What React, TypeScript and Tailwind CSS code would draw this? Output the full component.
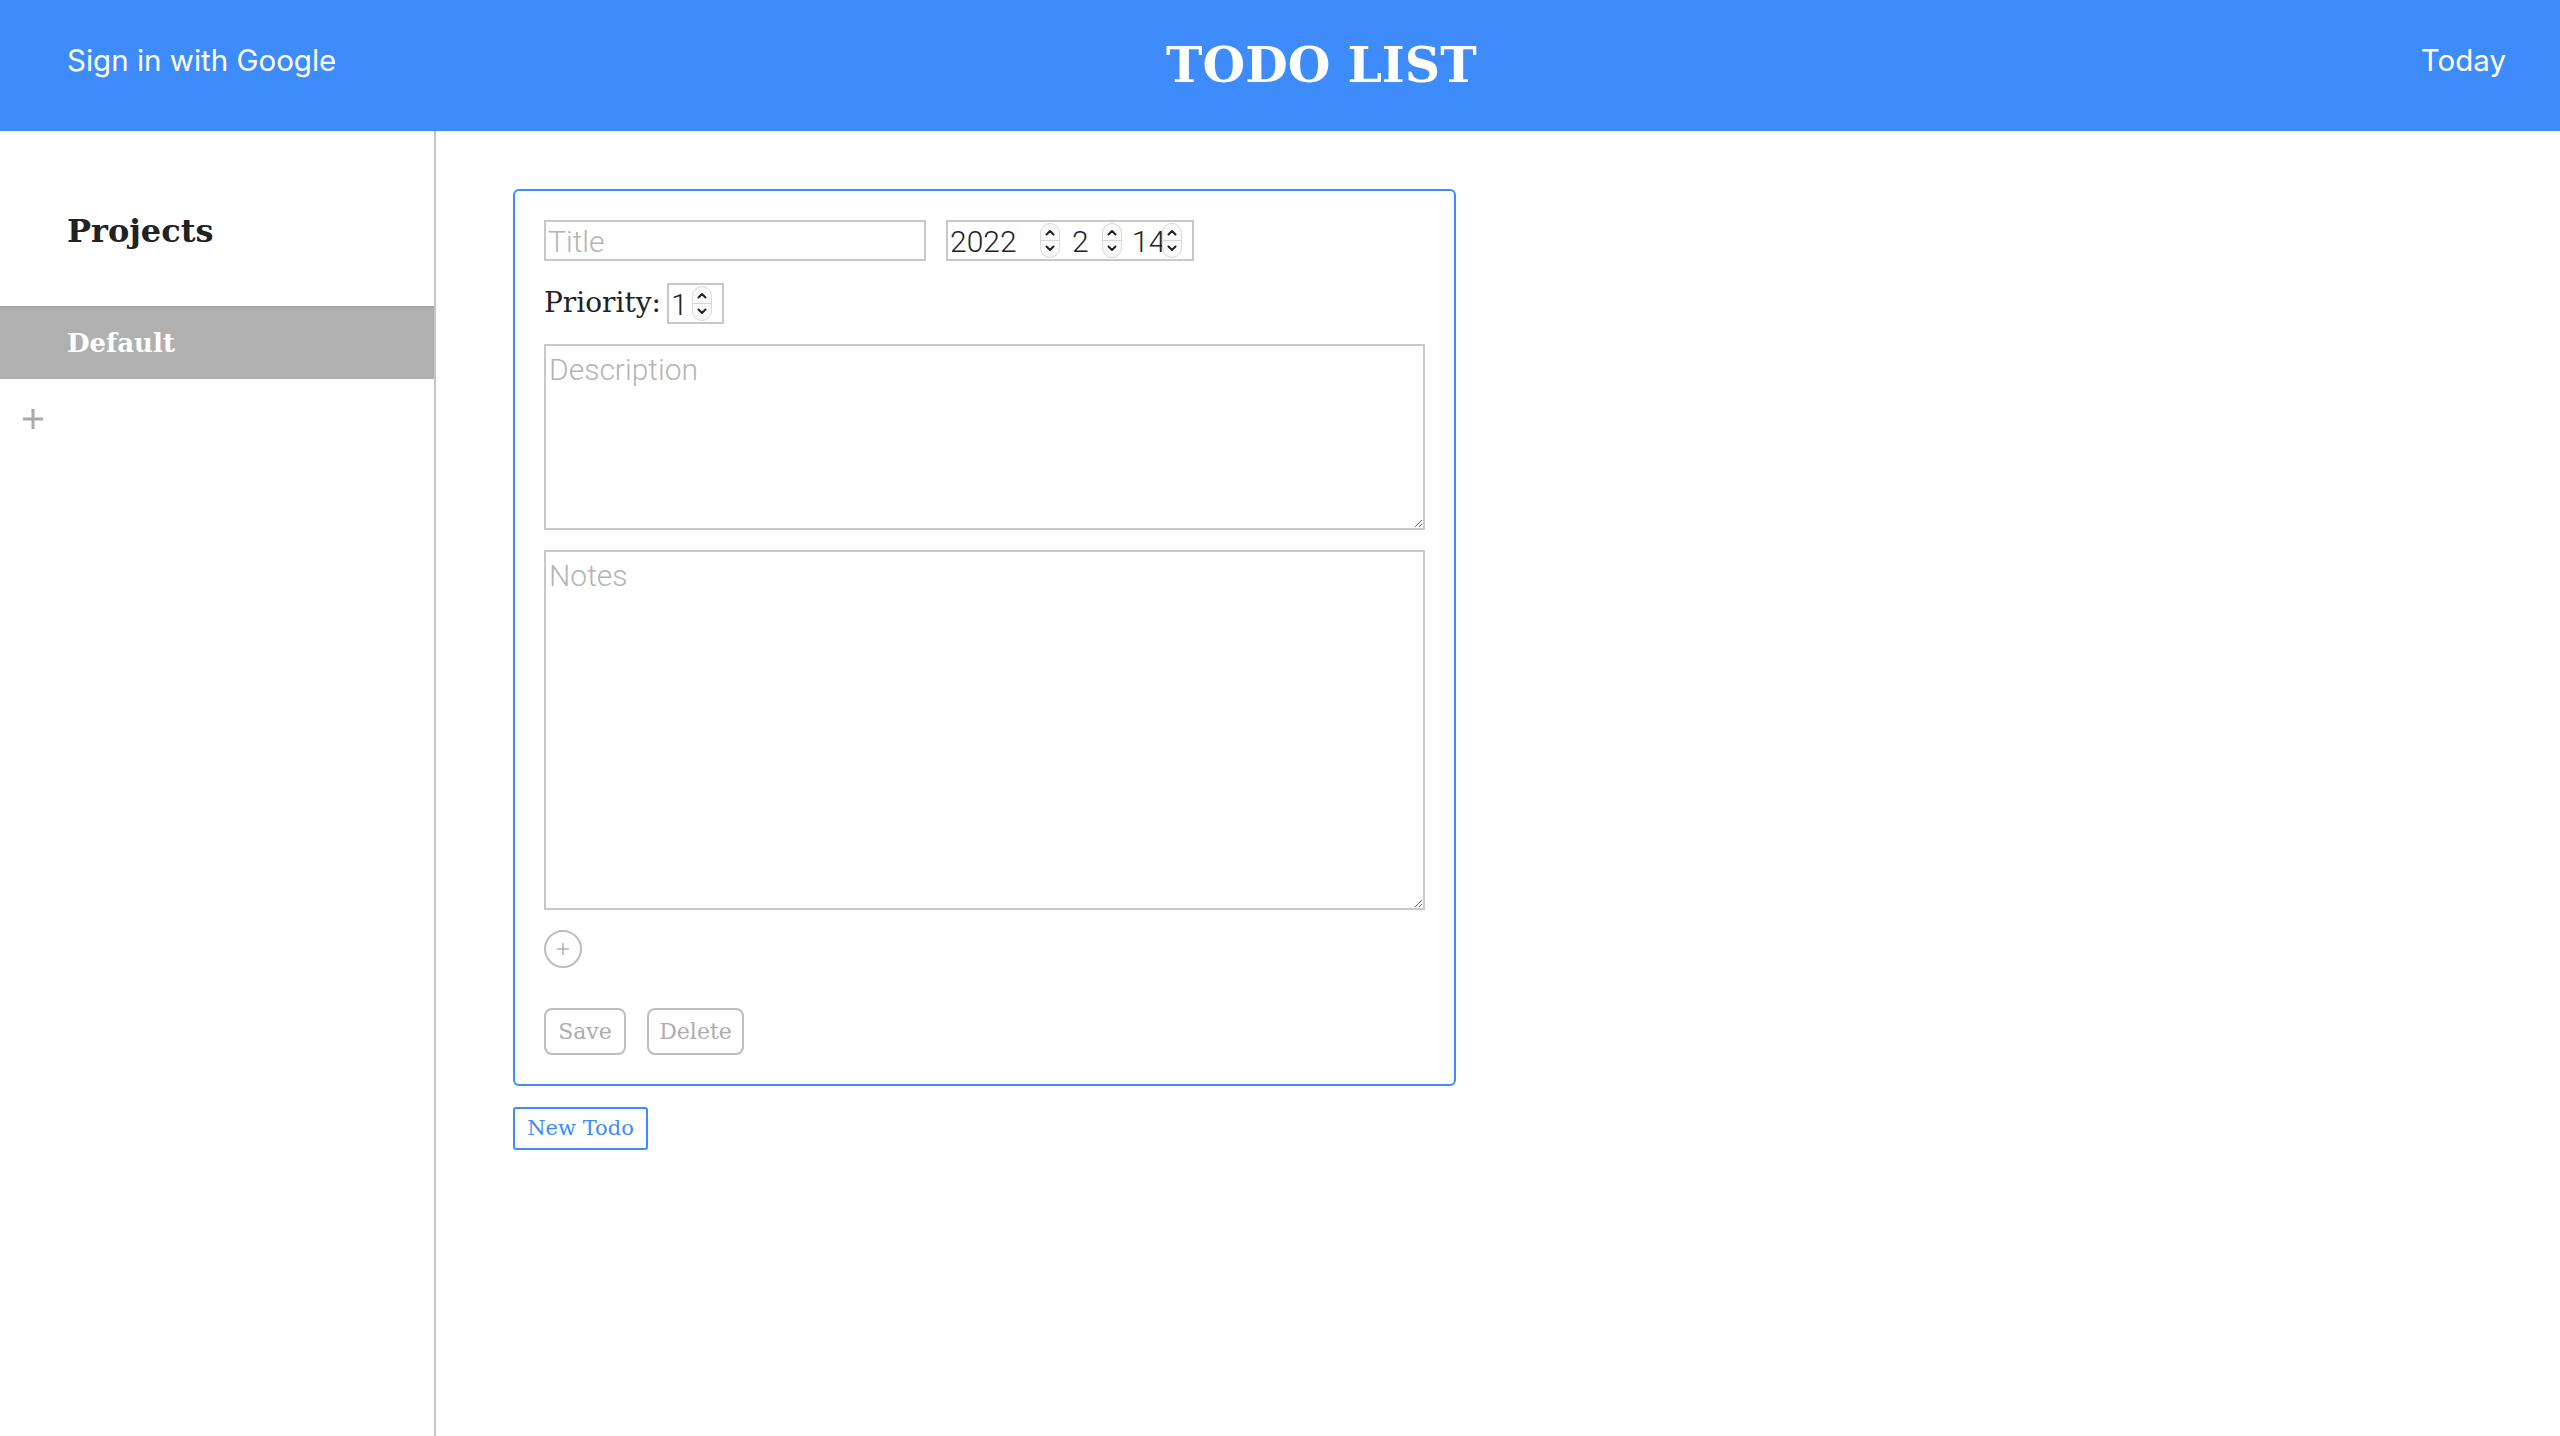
import React from 'react';

const slab = "font-['DejaVu_Serif',serif]";
const sans = "font-['Roboto','Liberation_Sans',sans-serif]";

const Spinner = () => (
  <span className="flex h-[35px] w-[20px] shrink-0 flex-col items-center justify-between rounded-full border border-[#d9d9d9] bg-[#fafafa] py-[5px]">
    <svg width="10" height="7" viewBox="0 0 10 7">
      <path d="M1.5 5.5 5 2l3.5 3.5" stroke="#222" strokeWidth="2" fill="none" strokeLinecap="round" strokeLinejoin="round" />
    </svg>
    <span className="h-px w-full bg-[#d6d6d6]" />
    <svg width="10" height="7" viewBox="0 0 10 7">
      <path d="M1.5 1.5 5 5l3.5-3.5" stroke="#222" strokeWidth="2" fill="none" strokeLinecap="round" strokeLinejoin="round" />
    </svg>
  </span>
);

export default function App() {
  return (
    <div className="flex min-h-screen flex-col bg-white">
      {/* Top bar */}
      <header className="flex h-[131px] shrink-0 items-center bg-[#3e8bfb] pl-[67px] pr-[54px] text-white">
        <div className="w-[1099px] shrink-0">
          <span className="mb-[10px] block font-['Inter',sans-serif] text-[29.5px]">Sign in with Google</span>
        </div>
        <h1 className={`${slab} text-[49px] font-bold leading-none`}>TODO LIST</h1>
        <span className="mb-[10px] ml-auto font-['Inter',sans-serif] text-[29.5px]">Today</span>
      </header>

      <div className="flex flex-1">
        {/* Sidebar */}
        <aside className="w-[436px] shrink-0 border-r-2 border-[#c6c6c6]">
          <div className="h-[175px] pl-[67px] pt-[80px]">
            <h2 className={`${slab} text-[32px] font-bold leading-[40px] text-[#222]`}>Projects</h2>
          </div>
          <div className="flex h-[73px] items-center border-t-2 border-[#a6a6a6] bg-[#b0b0b0] pl-[67px]">
            <span className={`${slab} text-[26px] font-bold text-white`}>Default</span>
          </div>
          <div className="mt-[29px] pl-[22px]">
            <svg width="22" height="22" viewBox="0 0 22 22">
              <path d="M11 1v20M1 11h20" stroke="#a9a9a9" strokeWidth="3" />
            </svg>
          </div>
        </aside>

        {/* Main */}
        <main className="flex-1 pl-[77px] pt-[58px]">
          <div className="w-[943px] rounded-[6px] border-2 border-[#3e8bfb] px-[29px] pb-[29px] pt-[29px]">
            <div className="flex h-[41px] gap-[20px]">
              <input
                type="text"
                placeholder="Title"
                className={`${sans} h-[41px] w-[382px] border-2 border-[#c8c8c8] px-[2px] pt-[2px] text-[30px] font-light text-[#222] outline-none placeholder:text-[#b4b4b4]`}
              />
              <div className={`${sans} flex h-[41px] w-[248px] items-center border-2 border-[#c8c8c8] pl-[2px] pt-[2px] text-[30px] font-light text-[#222]`}>
                <span className="w-[88px]">2022</span>
                <span className="ml-[2px] -mt-[2px]"><Spinner /></span>
                <span className="ml-[12px] w-[30px]">2</span>
                <span className="-mt-[2px]"><Spinner /></span>
                <span className="ml-[10px] w-[30px]">14</span>
                <span className="-mt-[2px]"><Spinner /></span>
              </div>
            </div>

            <div className="mt-[21px] flex items-center gap-[6px]">
              <span className={`${slab} text-[28px] text-[#222]`}>Priority:</span>
              <div className={`${sans} flex h-[41px] w-[57px] items-center border-2 border-[#c8c8c8] pl-[2px] pt-[2px] text-[30px] font-light text-[#222]`}>
                <span className="w-[21px]">1</span>
                <span className="-mt-[2px]"><Spinner /></span>
              </div>
            </div>

            <textarea
              placeholder="Description"
              className={`${sans} mt-[20px] block h-[186px] w-full border-2 border-[#c8c8c8] px-[3px] pb-[4px] pt-[1px] text-[30px] font-light text-[#222] outline-none placeholder:text-[#b4b4b4]`}
            />
            <textarea
              placeholder="Notes"
              className={`${sans} mt-[20px] block h-[360px] w-full border-2 border-[#c8c8c8] px-[3px] pb-[4px] pt-[1px] text-[30px] font-light text-[#222] outline-none placeholder:text-[#b4b4b4]`}
            />

            <button className="mt-[20px] flex h-[38px] w-[38px] items-center justify-center rounded-full border-2 border-[#bdbdbd]">
              <svg width="14" height="14" viewBox="0 0 14 14">
                <path d="M7 1v12M1 7h12" stroke="#b0b0b0" strokeWidth="1.5" />
              </svg>
            </button>

            <div className="mt-[40px] flex gap-[21px]">
              <button className={`${slab} h-[47px] w-[82px] rounded-[8px] border-2 border-[#bdbdbd] text-[22px] text-[#adadad]`}>
                Save
              </button>
              <button className={`${slab} h-[47px] w-[97px] rounded-[8px] border-2 border-[#bdbdbd] text-[22px] text-[#adadad]`}>
                Delete
              </button>
            </div>
          </div>

          <button className={`${slab} mt-[21px] h-[43px] w-[135px] rounded-[3px] border-2 border-[#3e8bfb] text-[21px] text-[#3e8bfb]`}>
            New Todo
          </button>
        </main>
      </div>
    </div>
  );
}
